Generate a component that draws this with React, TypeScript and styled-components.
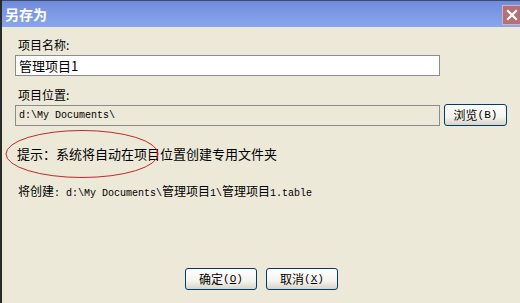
import React from "react";
import styled, { createGlobalStyle } from "styled-components";

const CJK = `"Noto Sans CJK SC", "Noto Sans", sans-serif`;
const MONO = `"Liberation Mono", "Noto Sans CJK SC", monospace`;

const GlobalStyle = createGlobalStyle`
  html, body {
    margin: 0;
    padding: 0;
    background: #ece9d8;
  }
  body {
    font-family: ${CJK};
    color: #000;
  }
`;

const Window = styled.div`
  width: 520px;
  height: 303px;
  display: flex;
  flex-direction: column;
  background: #ece9d8;
  box-sizing: border-box;
  border-left: 2px solid #2a2a2a;
  overflow: hidden;
`;

const TitleBar = styled.div`
  height: 27px;
  flex: 0 0 27px;
  display: flex;
  align-items: center;
  justify-content: space-between;
  box-sizing: border-box;
  border-top: 1px solid #3d4a6a;
  background: linear-gradient(to bottom, #6f8bdb 0%, #7c98e4 45%, #88a6ee 100%);
  padding-left: 3px;
`;

const Title = styled.span`
  color: #fff;
  font-family: ${CJK};
  font-weight: bold;
  font-size: 14px;
  line-height: 18px;
  margin-top: -1px;
`;

const CloseButton = styled.div`
  width: 18px;
  height: 20px;
  margin-top: 2px;
  display: flex;
  align-items: center;
  justify-content: center;
  background: #b37079;
  border: 1px solid #d9b0b8;
  border-right: none;
  box-sizing: border-box;
`;

const Body = styled.div`
  flex: 1;
  display: flex;
  flex-direction: column;
  padding: 10px 0 0 13px;
`;

const Label = styled.div`
  font-size: 12px;
  line-height: 16px;
  height: 16px;
  padding-left: 3px;
`;

const Row = styled.div<{ $top: number }>`
  display: flex;
  align-items: center;
  margin-top: ${(p) => p.$top}px;
`;

const Field = styled.div<{ $disabled?: boolean }>`
  width: 425px;
  height: 21px;
  box-sizing: border-box;
  border: 1px solid #8c8c8c;
  background: ${(p) => (p.$disabled ? "#ece9d8" : "#fff")};
  display: flex;
  align-items: center;
  padding-left: 3px;
  font-size: 13px;
`;

const Mono = styled.span<{ $size?: number }>`
  font-family: ${MONO};
  font-size: ${(p) => p.$size ?? 10}px;
`;

const Button = styled.div<{ $width: number }>`
  width: ${(p) => p.$width}px;
  height: 22px;
  box-sizing: border-box;
  border: 1px solid #003c74;
  border-radius: 3px;
  background: linear-gradient(to bottom, #ffffff 0%, #f4f3ee 60%, #d8d5c7 100%);
  display: flex;
  align-items: center;
  justify-content: center;
  font-size: 12px;
  line-height: 14px;
`;

const BrowseButton = styled(Button)`
  margin-left: 4px;
`;

const Underline = styled.span`
  text-decoration: underline;
`;

const Hint = styled.div`
  position: relative;
  margin-top: 19px;
  font-size: 13px;
  line-height: 18px;
  height: 18px;
  padding-left: 2px;
`;

const Annotation = styled.svg`
  position: absolute;
  left: -12px;
  top: -16px;
  pointer-events: none;
`;

const Result = styled.div`
  margin-top: 20px;
  font-size: 12px;
  line-height: 16px;
  padding-left: 3px;
`;

const Footer = styled.div`
  margin-top: 66px;
  display: flex;
  justify-content: center;
  gap: 9px;
  padding-right: 12px;
`;

export default function App() {
  return (
    <>
      <GlobalStyle />
      <Window>
        <TitleBar>
          <Title>另存为</Title>
          <CloseButton>
            <svg width="12" height="12" viewBox="0 0 12 12">
              <path d="M2 2 L10 10 M10 2 L2 10" stroke="#fff" strokeWidth="2.2" strokeLinecap="square" />
            </svg>
          </CloseButton>
        </TitleBar>
        <Body>
          <Label>项目名称:</Label>
          <Row $top={2}>
            <Field>管理项目1</Field>
          </Row>
          <Label style={{ marginTop: 11 }}>项目位置:</Label>
          <Row $top={1}>
            <Field $disabled>
              <Mono>d:\My Documents\</Mono>
            </Field>
            <BrowseButton $width={63}>
              浏览<Mono $size={11}>(B)</Mono>
            </BrowseButton>
          </Row>
          <Hint>
            提示：系统将自动在项目位置创建专用文件夹
            <Annotation width="160" height="52" viewBox="0 0 160 52">
              <ellipse cx="79" cy="25" rx="76" ry="23.5" fill="none" stroke="#c0282c" strokeWidth="1" />
            </Annotation>
          </Hint>
          <Result>
            将创建<Mono>: d:\My Documents\</Mono>管理项目<Mono>1\</Mono>管理项目<Mono>1.table</Mono>
          </Result>
          <Footer>
            <Button $width={72}>
              确定<Mono $size={11}>(<Underline>O</Underline>)</Mono>
            </Button>
            <Button $width={72}>
              取消<Mono $size={11}>(<Underline>X</Underline>)</Mono>
            </Button>
          </Footer>
        </Body>
      </Window>
    </>
  );
}
